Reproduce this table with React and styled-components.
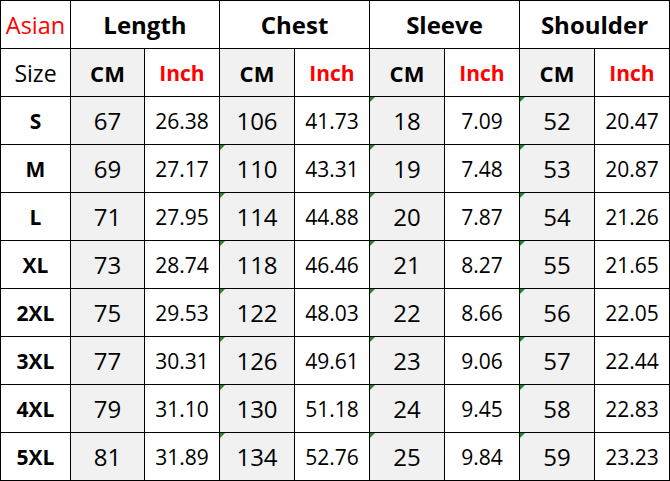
import React from 'react';
import styled, { createGlobalStyle } from 'styled-components';

const GlobalStyle = createGlobalStyle`
  html, body {
    margin: 0;
    padding: 0;
    background: #ffffff;
  }
`;

const SizeTable = styled.div`
  display: grid;
  grid-template-columns: 69px 73px repeat(7, 74px);
  grid-auto-rows: 47px;
  gap: 1px;
  padding: 1px;
  width: 668px;
  background: #000000;
  font-family: "Open Sans", "Noto Sans", "Liberation Sans", sans-serif;
`;

const Cell = styled.div`
  position: relative;
  display: flex;
  align-items: center;
  justify-content: center;
  background: ${props => (props.shaded ? '#f1f1f1' : '#ffffff')};
  color: ${props => (props.red ? '#ff0000' : '#000000')};
  font-size: ${props => props.size || 20}px;
  font-weight: ${props => (props.bold ? 700 : 400)};
  grid-column: span ${props => props.span || 1};
  white-space: nowrap;
`;

const Marker = styled.span`
  position: absolute;
  left: 0;
  top: 0;
  width: 0;
  height: 0;
  border-top: 5px solid #1e8a2a;
  border-right: 5px solid transparent;
`;

const groups = ['Length', 'Chest', 'Sleeve', 'Shoulder'];

const rows = [
  ['S', 67, '26.38', 106, '41.73', 18, '7.09', 52, '20.47'],
  ['M', 69, '27.17', 110, '43.31', 19, '7.48', 53, '20.87'],
  ['L', 71, '27.95', 114, '44.88', 20, '7.87', 54, '21.26'],
  ['XL', 73, '28.74', 118, '46.46', 21, '8.27', 55, '21.65'],
  ['2XL', 75, '29.53', 122, '48.03', 22, '8.66', 56, '22.05'],
  ['3XL', 77, '30.31', 126, '49.61', 23, '9.06', 57, '22.44'],
  ['4XL', 79, '31.10', 130, '51.18', 24, '9.45', 58, '22.83'],
  ['5XL', 81, '31.89', 134, '52.76', 25, '9.84', 59, '23.23'],
];

// which cm columns carry the little green corner flag
const hasMarker = (group, rowIndex) => {
  if (group === 1) return rowIndex > 0;
  return group >= 2;
};

const App = () => (
  <>
    <GlobalStyle />
    <SizeTable>
      <Cell red size={23.5}>Asian</Cell>
      {groups.map(g => (
        <Cell key={g} span={2} bold size={24}>{g}</Cell>
      ))}

      <Cell size={23}>Size</Cell>
      {groups.map(g => (
        <React.Fragment key={g}>
          <Cell shaded bold size={22}>CM</Cell>
          <Cell red bold size={21}>Inch</Cell>
        </React.Fragment>
      ))}

      {rows.map((row, ri) => (
        <React.Fragment key={row[0]}>
          <Cell bold size={21}>{row[0]}</Cell>
          {groups.map((g, gi) => (
            <React.Fragment key={g}>
              <Cell shaded size={24}>
                {hasMarker(gi, ri) && <Marker />}
                {row[1 + gi * 2]}
              </Cell>
              <Cell size={21}>{row[2 + gi * 2]}</Cell>
            </React.Fragment>
          ))}
        </React.Fragment>
      ))}
    </SizeTable>
  </>
);

export default App;
